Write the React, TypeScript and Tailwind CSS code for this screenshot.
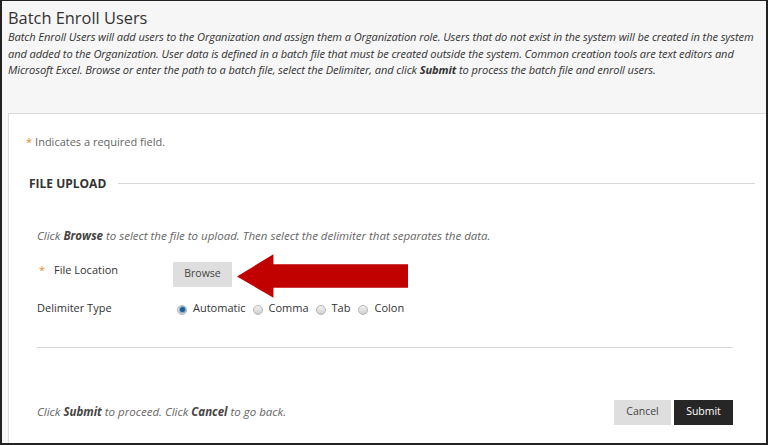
import React from "react";

function Radio({ checked }: { checked?: boolean }) {
  return (
    <span className="relative inline-flex h-[10px] w-[10px] shrink-0 items-center justify-center rounded-full border border-[#b5b5b5] bg-gradient-to-b from-[#f2f2f2] to-[#cfcfcf] mt-[5px]">
      {checked && <span className="h-[5px] w-[5px] rounded-full bg-[#1f5f95] ring-1 ring-[#7fa8c9]" />}
    </span>
  );
}

export default function App() {
  const font = { fontFamily: '"Open Sans", "Liberation Sans", sans-serif' };
  return (
    <div
      className="relative flex h-[445px] w-[768px] flex-col overflow-hidden border-x-2 border-t border-b-2 border-[#222] bg-[#f6f6f6] text-[#333]"
      style={font}
    >
      <div className="pl-[6px] pr-[2px] pt-[6px]">
        <h1 className="text-[16.4px] leading-[22px] text-[#333]">Batch Enroll Users</h1>
        <p className="text-[11.1px] italic leading-[16.5px] tracking-[-0.1px] text-[#333]">
          Batch Enroll Users will add users to the Organization and assign them a Organization role. Users that do not exist in the system will be created in the system and added to the Organization. User data is defined in a batch file that must be created outside the system. Common creation tools are text editors and Microsoft Excel. Browse or enter the path to a batch file, select the Delimiter, and click <b className="font-bold">Submit</b> to process the batch file and enroll users.
        </p>
      </div>
      <div className="ml-[6px] mt-[34px] flex flex-1 flex-col border-l border-t border-[#dcdcdc] bg-white pr-[33px]">
        <div className="ml-[17px] mt-[21px] flex h-[16px] items-center text-[11px] text-[#666]">
          <span className="mr-[3px] text-[#e58a2e]">*</span>
          <span>Indicates a required field.</span>
        </div>
        <div className="ml-[20px] mr-[-22px] mt-[25px] flex h-[16px] items-center">
          <span className="text-[12px] font-bold text-[#333]">FILE UPLOAD</span>
          <span className="ml-[12px] h-px flex-1 bg-[#d8d8d8]" />
        </div>
        <p className="ml-[28px] mt-[36px] h-[16px] text-[11.5px] italic leading-[16px] text-[#666]">
          Click <b className="font-bold text-[#444]">Browse</b> to select the file to upload. Then select the delimiter that separates the data.
        </p>
        <div className="ml-[28px] mt-[18px] flex h-[25px] items-start">
          <div className="mt-[1px] flex h-[16px] w-[136px] items-center text-[11px] text-[#333]">
            <span className="ml-[2px] w-[15px] text-[#e58a2e]">*</span>
            <span>File Location</span>
          </div>
          <button className="h-[25px] w-[59px] rounded-[1px] bg-[#dedede] text-[10.5px] text-[#444]">Browse</button>
        </div>
        <div className="ml-[28px] mt-[13px] flex h-[16px] items-start text-[11px] leading-[16px] text-[#333]">
          <span className="w-[140px]">Delimiter Type</span>
          <span className="flex items-start">
            <Radio checked />
            <span className="ml-[6px]">Automatic</span>
            <span className="ml-[7px]"><Radio /></span>
            <span className="ml-[6px]">Comma</span>
            <span className="ml-[7px]"><Radio /></span>
            <span className="ml-[6px]">Tab</span>
            <span className="ml-[8px]"><Radio /></span>
            <span className="ml-[6px]">Colon</span>
          </span>
        </div>
        <div className="ml-[28px] mt-[31px] h-px bg-[#d8d8d8]" />
        <div className="ml-[28px] mt-[52px] flex items-center">
          <p className="flex-1 text-[11.5px] italic text-[#666]">
            Click <b className="font-bold text-[#444]">Submit</b> to proceed. Click <b className="font-bold text-[#444]">Cancel</b> to go back.
          </p>
          <button className="h-[25px] w-[57px] bg-[#dedede] text-[10.5px] text-[#444]">Cancel</button>
          <button className="ml-[3px] h-[25px] w-[59px] bg-[#262626] text-[10.5px] text-white">Submit</button>
        </div>
      </div>
      <svg className="absolute left-[235px] top-[253px]" width="171" height="44" viewBox="0 0 169 43">
        <polygon points="0,22 36,0 36,10 169,10 169,33 36,33 36,43" fill="#c10000" />
      </svg>
    </div>
  );
}
